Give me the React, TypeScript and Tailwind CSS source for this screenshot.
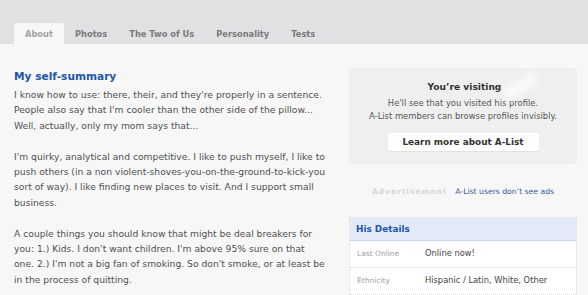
const tabs = ["About", "Photos", "The Two of Us", "Personality", "Tests"];

const paragraphs = [
  [
    "I know how to use: there, their, and they're properly in a sentence.",
    "People also say that I'm cooler than the other side of the pillow...",
    "Well, actually, only my mom says that...",
  ],
  [
    "I'm quirky, analytical and competitive. I like to push myself, I like to",
    "push others (in a non violent-shoves-you-on-the-ground-to-kick-you",
    "sort of way). I like finding new places to visit. And I support small",
    "business.",
  ],
  [
    "A couple things you should know that might be deal breakers for",
    "you: 1.) Kids. I don't want children. I'm above 95% sure on that",
    "one. 2.) I'm not a big fan of smoking. So don't smoke, or at least be",
    "in the process of quitting.",
  ],
];

function Tabs() {
  return (
    <div className="h-[44px] bg-[#e1e1e3] flex items-end pl-[14px]">
      {tabs.map((t, i) => (
        <div
          key={t}
          className={
            i === 0
              ? "h-[21px] px-[11px] rounded-t-[3px] bg-[#f7f7f7] text-[#a3a3a3] text-[8.3px] font-bold leading-[22px]"
              : "h-[21px] px-[11px] text-[#7a7a7a] text-[8.3px] font-bold leading-[22px]"
          }
        >
          {t}
        </div>
      ))}
    </div>
  );
}

function Summary() {
  return (
    <div className="w-[335px] pl-[14px] pt-[25px] shrink-0">
      <h2 className="text-[10.6px] font-bold text-[#1f56a6] leading-[14px] mb-[4px]">My self-summary</h2>
      <div className="text-[9.2px] leading-[15.4px] text-[#505050] flex flex-col gap-[15.4px]">
        {paragraphs.map((p, i) => (
          <p key={i}>
            {p.map((line) => (
              <span key={line} className="block whitespace-nowrap">
                {line}
              </span>
            ))}
          </p>
        ))}
      </div>
    </div>
  );
}

function Visiting() {
  return (
    <div className="h-[96px] rounded-[4px] bg-[#efefef] flex flex-col items-center pt-[13px]">
      <div className="text-[9.1px] font-bold text-[#333] leading-[12px] pl-[40px] flex items-center">
        You’re visiting
        <span className="inline-block w-[36px] h-[12px] ml-[1px] bg-white/70 blur-[3px] rotate-[-30deg]" />
      </div>
      <div className="mt-[4px] text-[8.4px] leading-[13px] text-[#555] text-center">
        He'll see that you visited his profile.
        <br />
        A-List members can browse profiles invisibly.
      </div>
      <div className="mt-[10px] w-[151px] h-[18px] bg-white rounded-[2px] text-[8.9px] font-bold text-[#333] leading-[18px] text-center shadow-[0_1px_1px_rgba(0,0,0,0.06)]">
        Learn more about A-List
      </div>
    </div>
  );
}

function Details() {
  const rows = [
    ["Last Online", "Online now!"],
    ["Ethnicity", "Hispanic / Latin, White, Other"],
  ];
  return (
    <div className="border border-dotted border-[#dcdcdc] border-b-0">
      <div className="h-[23px] bg-[#e3eaf7] border-b border-[#c9d6ec] pl-[6px] text-[8.9px] font-bold text-[#2356a8] leading-[22px]">
        His Details
      </div>
      {rows.map(([k, v]) => (
        <div key={k} className="h-[27px] bg-white border-b border-dotted border-[#dcdcdc] flex items-center">
          <span className="w-[75px] pl-[7px] text-[7.5px] text-[#a0a0a0]">{k}</span>
          <span className="text-[8.3px] text-[#444]">{v}</span>
        </div>
      ))}
    </div>
  );
}

export default function App() {
  return (
    <div className="w-[588px] h-[295px] overflow-hidden bg-[#f7f7f7] font-['DejaVu_Sans',Verdana,sans-serif]">
      <Tabs />
      <div className="flex">
        <Summary />
        <div className="ml-[14px] w-[228px] pt-[24px]">
          <Visiting />
          <div className="mt-[22px] flex justify-center items-baseline gap-[8px]">
            <span className="text-[7.5px] font-bold tracking-[1px] text-[#d6d6d6]">Advertisement</span>
            <span className="text-[7.7px] text-[#3b5b9c]">A-List users don’t see ads</span>
          </div>
          <div className="mt-[19px]">
            <Details />
          </div>
        </div>
      </div>
    </div>
  );
}
